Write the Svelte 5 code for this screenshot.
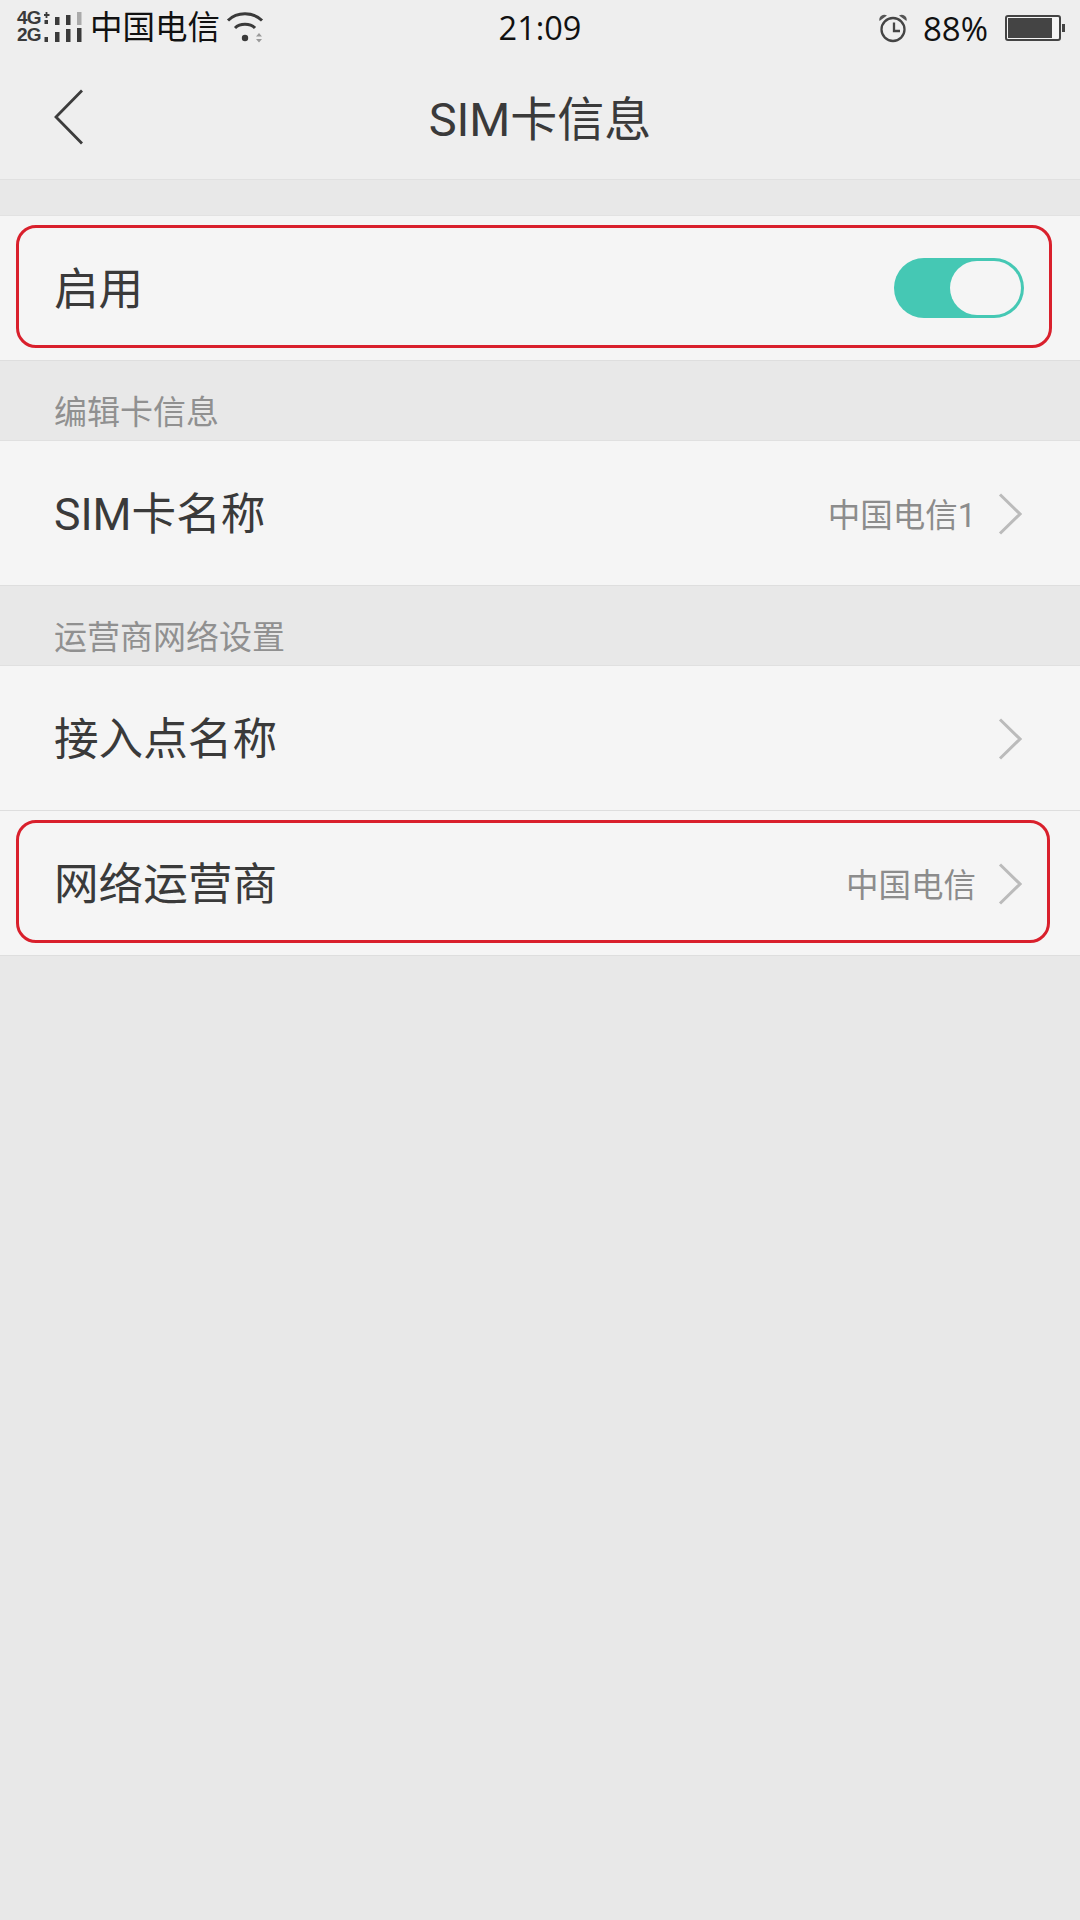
<script lang="ts">
	// top half of the dual signal indicator, bottom half is always full
	const signalBars = [
		{ x: 38, top: 7, height: 8, color: '#3a3a3a' },
		{ x: 49, top: 5, height: 10, color: '#3a3a3a' },
		{ x: 60, top: 2, height: 13, color: '#aaa' }
	];
	const lowerBars = [
		{ x: 38, top: 22 },
		{ x: 49, top: 19 },
		{ x: 60, top: 18 }
	];
</script>

<div class="screen">
	<div class="status-bar">
		<div class="status-left">
			<div class="net">
				<span>4G</span>
				<span>2G</span>
			</div>
			<svg width="47" height="36" viewBox="27 0 47 36">
				<path d="M29.500 2v6M26.500 5h6" stroke="#3a3a3a" stroke-width="1.800" />
				<rect x="27.500" y="10" width="3.500" height="4" fill="#3a3a3a" />
				<rect x="27.500" y="27" width="3.500" height="5" fill="#3a3a3a" />
				{#each signalBars as bar}
					<rect x={bar.x} y={bar.top} width="4.500" height={bar.height} fill={bar.color} />
				{/each}
				{#each lowerBars as bar}
					<rect x={bar.x} y={bar.top} width="4.500" height={32 - bar.top} fill="#3a3a3a" />
				{/each}
			</svg>
			<span class="carrier">中国电信</span>
			<svg class="wifi" width="38" height="32" viewBox="0 0 38 32">
				<path d="M2 8.500C11 -0.500 27 -0.500 36 8.500" fill="none" stroke="#3a3a3a" stroke-width="3" />
				<path d="M9 16C14 11 24 11 29 16" fill="none" stroke="#3a3a3a" stroke-width="3" />
				<circle cx="19" cy="26" r="3.200" fill="#3a3a3a" />
				<path d="M30 24.500l3-3.500 3 3.500zM30 27l3 3.500 3-3.500z" fill="#999" />
			</svg>
		</div>
		<span class="clock">21:09</span>
		<div class="status-right">
			<svg width="30" height="30" viewBox="0 0 30 30">
				<circle cx="15" cy="16.500" r="11.500" fill="none" stroke="#444" stroke-width="2.300" />
				<path d="M16 9.500v8.500h6" fill="none" stroke="#444" stroke-width="2.300" />
				<path d="M1.500 8a5 5 0 0 1 7.500-5.500zM28.500 8a5 5 0 0 0-7.500-5.500z" fill="#555" />
			</svg>
			<span class="battery-pct">88%</span>
			<div class="battery">
				<div class="battery-body"><div class="battery-fill"></div></div>
				<div class="battery-tip"></div>
			</div>
		</div>
	</div>

	<header class="title-bar">
		<svg class="back" width="30" height="56" viewBox="0 0 30 56">
			<path d="M28 1.500L2 28l26 26.500" fill="none" stroke="#3c3c3c" stroke-width="2.800" />
		</svg>
		<h1>SIM卡信息</h1>
	</header>

	<div class="gap"></div>

	<div class="row">
		<span class="label">启用</span>
		<div class="toggle"><div class="knob"></div></div>
		<div class="mark mark-top"></div>
	</div>

	<div class="section-title">编辑卡信息</div>

	<div class="row">
		<span class="label">SIM卡名称</span>
		<span class="value">中国电信1</span>
		<svg class="chevron" width="24" height="42" viewBox="0 0 24 42">
			<path d="M2 1.500L22 21 2 40.500" fill="none" stroke="#bbb" stroke-width="3" />
		</svg>
	</div>

	<div class="section-title">运营商网络设置</div>

	<div class="row">
		<span class="label">接入点名称</span>
		<svg class="chevron" width="24" height="42" viewBox="0 0 24 42">
			<path d="M2 1.500L22 21 2 40.500" fill="none" stroke="#bbb" stroke-width="3" />
		</svg>
	</div>
	<div class="row">
		<span class="label">网络运营商</span>
		<span class="value">中国电信</span>
		<svg class="chevron" width="24" height="42" viewBox="0 0 24 42">
			<path d="M2 1.500L22 21 2 40.500" fill="none" stroke="#bbb" stroke-width="3" />
		</svg>
		<div class="mark mark-bottom"></div>
	</div>
</div>

<style>
	:global(body) {
		margin: 0;
		background: #e8e8e8;
	}

	.screen {
		width: 1080px;
		height: 1920px;
		background: #e8e8e8;
		font-family: Roboto, 'Noto Sans CJK SC', sans-serif;
		overflow: hidden;
	}

	.status-bar {
		height: 56px;
		background: #eeeeee;
		display: grid;
		grid-template-columns: 1fr auto 1fr;
		align-items: center;
		padding: 0 15px;
		color: #111;
	}

	.status-left {
		display: flex;
		align-items: center;
	}

	.net {
		width: 27px;
		height: 36px;
		margin-left: 2px;
		display: flex;
		flex-direction: column;
		font-family: 'Liberation Sans', sans-serif;
		font-size: 19px;
		font-weight: 700;
		line-height: 16.500px;
		color: #3a3a3a;
		letter-spacing: -0.800px;
	}

	.carrier {
		font-size: 32.500px;
		line-height: 1;
		margin-left: -1px;
	}

	.wifi {
		margin-left: 6px;
	}

	.clock {
		font-family: 'Open Sans', sans-serif;
		font-size: 32.500px;
		line-height: 1;
	}

	.status-right {
		display: flex;
		align-items: center;
		justify-content: flex-end;
	}

	.battery-pct {
		font-family: 'Open Sans', sans-serif;
		font-size: 33px;
		line-height: 1;
		margin-left: 15px;
		margin-right: 17px;
	}

	.battery {
		display: flex;
		align-items: center;
	}

	.battery-body {
		width: 56px;
		height: 26px;
		box-sizing: border-box;
		border: 2px solid #444;
		border-radius: 3px;
		padding: 1px;
		background: #f5f5f5;
	}

	.battery-fill {
		width: 44px;
		height: 100%;
		background: #444;
	}

	.battery-tip {
		width: 3px;
		height: 8px;
		background: #444;
		margin-left: 1px;
	}

	.title-bar {
		height: 123px;
		background: #eeeeee;
		border-bottom: 1px solid #e0e0e0;
		position: relative;
		display: flex;
		align-items: center;
		justify-content: center;
	}

	.back {
		position: absolute;
		left: 54px;
		top: 33px;
	}

	h1 {
		margin: 0;
		font-size: 47px;
		font-weight: 400;
		color: #3a3a3a;
		padding-bottom: 4px;
	}

	.gap {
		height: 35px;
		background: #e8e8e8;
		border-bottom: 1px solid #e2e2e2;
	}

	.row {
		height: 145px;
		box-sizing: border-box;
		background: #f5f5f5;
		border-bottom: 1px solid #dedede;
		display: flex;
		align-items: center;
		padding: 0 58px 0 54px;
		position: relative;
	}

	.label {
		font-size: 44.600px;
		color: #3a3a3a;
		flex: 1;
		padding-bottom: 5px;
	}

	.value {
		font-size: 32.500px;
		color: #8c8c8c;
		margin-right: 22px;
		padding-bottom: 2px;
	}

	.toggle {
		width: 130px;
		height: 60px;
		box-sizing: border-box;
		background: #45c8b4;
		border-radius: 30px;
		padding: 3px 3px 3px 0;
		display: flex;
		justify-content: flex-end;
		margin-right: -2px;
	}

	.knob {
		width: 71px;
		height: 54px;
		background: #f5f5f5;
		border-radius: 27px;
	}

	.chevron {
		display: block;
		margin-top: 2px;
	}

	.section-title {
		height: 80px;
		box-sizing: border-box;
		padding: 32px 0 0 54px;
		font-size: 33px;
		line-height: 40px;
		color: #909090;
		background: #e8e8e8;
		border-bottom: 1px solid #e0e0e0;
	}

	/* red annotation boxes drawn over the rows */
	.mark {
		position: absolute;
		box-sizing: border-box;
		border: 3px solid #d9202c;
		border-radius: 20px;
		pointer-events: none;
	}

	.mark-top {
		left: 16px;
		top: 9px;
		width: 1036px;
		height: 123px;
	}

	.mark-bottom {
		left: 16px;
		top: 9px;
		width: 1034px;
		height: 123px;
	}
</style>
